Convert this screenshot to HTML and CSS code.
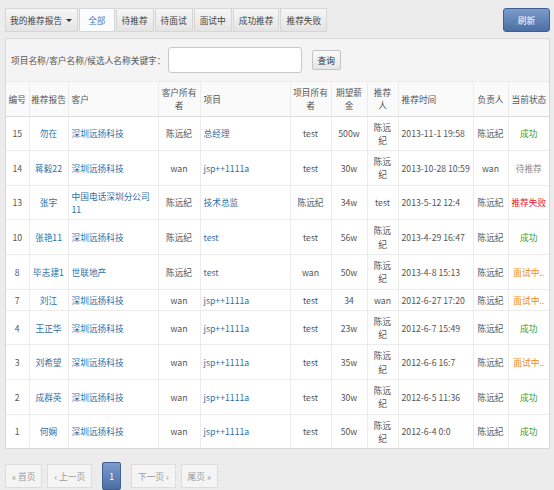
FILE: index.html
```html
<!DOCTYPE html>
<html>
<head>
  <meta charset="utf-8">
  <title>我的推荐报告</title>
  <link rel="stylesheet" href="styles.css">
</head>
<body>
  <div class="topbar">
    <div class="tabs">
      <span class="tab dropdown">我的推荐报告 <span class="caret"></span></span>
      <span class="tab active">全部</span>
      <span class="tab">待推荐</span>
      <span class="tab">待面试</span>
      <span class="tab">面试中</span>
      <span class="tab">成功推荐</span>
      <span class="tab">推荐失败</span>
    </div>
    <button class="btn-refresh">刷新</button>
  </div>

  <div class="panel">
    <div class="search">
      <label>项目名称/客户名称/候选人名称关键字：</label>
      <input type="text" class="search-input">
      <button class="btn-query">查询</button>
    </div>
    <table class="report">
      <colgroup>
        <col style="width:23px"><col style="width:39px"><col style="width:90px"><col style="width:42px">
        <col style="width:90px"><col style="width:41px"><col style="width:36px"><col style="width:31px">
        <col style="width:75px"><col style="width:35px"><col style="width:41px">
      </colgroup>
      <thead>
        <tr>
          <th>编号</th><th>推荐报告</th><th class="l">客户</th><th>客户所有者</th><th class="l">项目</th>
          <th>项目所有者</th><th>期望薪金</th><th>推荐人</th><th class="l">推荐时间</th><th>负责人</th><th class="l">当前状态</th>
        </tr>
      </thead>
      <tbody>
        <tr><td>15</td><td><a>勿在</a></td><td class="l"><a>深圳远扬科技</a></td><td>陈远纪</td><td class="l"><a>总经理</a></td><td>test</td><td>500w</td><td>陈远纪</td><td class="l">2013-11-1 19:58</td><td>陈远纪</td><td class="ok">成功</td></tr>
        <tr><td>14</td><td><a>蒋毅22</a></td><td class="l"><a>深圳远扬科技</a></td><td>wan</td><td class="l"><a>jsp++1111a</a></td><td>test</td><td>30w</td><td>陈远纪</td><td class="l">2013-10-28 10:59</td><td>wan</td><td class="wait">待推荐</td></tr>
        <tr><td>13</td><td><a>张宇</a></td><td class="l"><a>中国电话深圳分公司11</a></td><td>陈远纪</td><td class="l"><a>技术总监</a></td><td>陈远纪</td><td>34w</td><td>test</td><td class="l">2013-5-12 12:4</td><td>陈远纪</td><td class="fail">推荐失败</td></tr>
        <tr><td>10</td><td><a>张艳11</a></td><td class="l"><a>深圳远扬科技</a></td><td>陈远纪</td><td class="l"><a>test</a></td><td>test</td><td>56w</td><td>陈远纪</td><td class="l">2013-4-29 16:47</td><td>陈远纪</td><td class="ok">成功</td></tr>
        <tr><td>8</td><td><a>毕志建1</a></td><td class="l"><a>世联地产</a></td><td>陈远纪</td><td class="l"><a>test</a></td><td>wan</td><td>50w</td><td>陈远纪</td><td class="l">2013-4-8 15:13</td><td>陈远纪</td><td class="ing">面试中..</td></tr>
        <tr><td>7</td><td><a>刘江</a></td><td class="l"><a>深圳远扬科技</a></td><td>wan</td><td class="l"><a>jsp++1111a</a></td><td>test</td><td>34</td><td>wan</td><td class="l">2012-6-27 17:20</td><td>陈远纪</td><td class="ing">面试中..</td></tr>
        <tr><td>4</td><td><a>王正华</a></td><td class="l"><a>深圳远扬科技</a></td><td>wan</td><td class="l"><a>jsp++1111a</a></td><td>test</td><td>23w</td><td>陈远纪</td><td class="l">2012-6-7 15:49</td><td>陈远纪</td><td class="ok">成功</td></tr>
        <tr><td>3</td><td><a>刘希望</a></td><td class="l"><a>深圳远扬科技</a></td><td>wan</td><td class="l"><a>jsp++1111a</a></td><td>test</td><td>35w</td><td>陈远纪</td><td class="l">2012-6-6 16:7</td><td>陈远纪</td><td class="ing">面试中..</td></tr>
        <tr><td>2</td><td><a>成群英</a></td><td class="l"><a>深圳远扬科技</a></td><td>wan</td><td class="l"><a>jsp++1111a</a></td><td>test</td><td>30w</td><td>陈远纪</td><td class="l">2012-6-5 11:36</td><td>陈远纪</td><td class="ok">成功</td></tr>
        <tr><td>1</td><td><a>何娴</a></td><td class="l"><a>深圳远扬科技</a></td><td>wan</td><td class="l"><a>jsp++1111a</a></td><td>test</td><td>50w</td><td>陈远纪</td><td class="l">2012-6-4 0:0</td><td>陈远纪</td><td class="ok">成功</td></tr>
      </tbody>
    </table>
  </div>

  <div class="pager">
    <span class="page">« 首页</span>
    <span class="page">‹ 上一页</span>
    <span class="page current">1</span>
    <span class="page">下一页 ›</span>
    <span class="page">尾页 »</span>
  </div>
</body>
</html>
```

FILE: styles.css
```css
body {
  margin: 0;
  padding: 8px 4px 0 5px;
  background-color: #ececec;
  font-family: "Noto Sans CJK SC", sans-serif;
  font-size: 8.7px;
  color: #555;
}

.topbar {
  display: flex;
  justify-content: space-between;
  align-items: flex-start;
  height: 24px;
}

.tabs {
  display: flex;
  gap: 1px;
}

.tab {
  display: flex;
  align-items: center;
  height: 22px;
  padding: 0 5px;
  border: 1px solid #d6d6d6;
  background: linear-gradient(#f6f6f6, #e4e4e4);
  color: #444;
}

.tab.dropdown {
  padding: 0 5px 0 4px;
}

.tab.active {
  background: #fafcfe;
  color: #3a7fc0;
  padding: 0 8px;
}

.caret {
  display: inline-block;
  margin-left: 4px;
  border-left: 3px solid transparent;
  border-right: 3px solid transparent;
  border-top: 3px solid #333;
}

.btn-refresh {
  width: 47px;
  height: 24px;
  border: 1px solid #3e5f8f;
  border-radius: 3px;
  background: linear-gradient(#7b9bcb, #4b6ea5);
  color: #fff;
  font-family: inherit;
  font-size: 8.7px;
  padding: 0;
}

.panel {
  margin-top: 6px;
  width: 543px;
  border: 1px solid #d8d8d8;
  background-color: #f4f4f4;
}

.search {
  display: flex;
  align-items: center;
  height: 42px;
  padding-left: 5px;
}

.search-input {
  width: 130px;
  height: 22px;
  margin-left: 2px;
  border: 1px solid #c8c8c8;
  border-radius: 3px;
  background: #fff;
  padding: 1px;
}

.btn-query {
  margin-left: 10px;
  height: 20px;
  padding: 0 5px;
  border: 1px solid #c4c4c4;
  border-radius: 2px;
  background: linear-gradient(#fafafa, #e6e6e6);
  font-family: inherit;
  font-size: 8.7px;
  color: #333;
}

.report {
  width: 100%;
  table-layout: fixed;
  border-collapse: collapse;
  background: #fff;
}

.report th,
.report td {
  padding: 4px 1px 3px;
  line-height: 13.3px;
  border: 1px solid #ececec;
  text-align: center;
  font-weight: normal;
  color: #555;
}

.report th {
  border-bottom-color: #dcdcdc;
  background: #fafafa;
}

.report th:nth-child(8),
.report td:nth-child(8) {
  padding-left: 3px;
  padding-right: 3px;
}

.report tr > :first-child { border-left: none; }
.report tr > :last-child { border-right: none; }
.report tbody tr:last-child td { border-bottom: none; }

.report .l {
  text-align: left;
  padding-left: 3px;
  padding-right: 2px;
}

.report a {
  color: #2d6fa6;
  text-decoration: none;
}

.report td.ok { color: #3a9a2a; }
.report td.wait { color: #8a8a8a; }
.report td.fail { color: #e8141e; }
.report td.ing { color: #f08a10; }

.pager {
  display: flex;
  align-items: center;
  gap: 5px;
  margin-top: 13px;
}

.page {
  display: flex;
  align-items: center;
  height: 22px;
  padding: 0 6px;
  border: 1px solid #dcdcdc;
  background: #f4f4f4;
  color: #9a9a9a;
}

.page.current {
  height: 26px;
  margin: 0 5px;
  border-color: #3e5f8f;
  border-radius: 2px;
  background: linear-gradient(#7b9bcb, #4b6ea5);
  color: #fff;
}
```
